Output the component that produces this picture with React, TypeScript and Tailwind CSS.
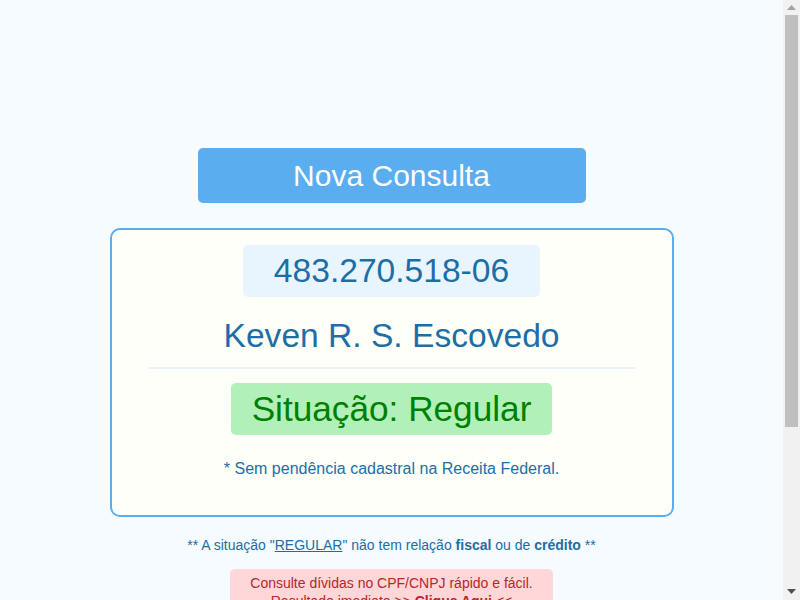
import React from "react";

export default function App() {
  return (
    <div className="h-[600px] flex overflow-hidden bg-[#f5fbff] font-['Liberation_Sans',Arial,sans-serif]">
      <div className="w-[783px] shrink-0 min-h-[824px] flex flex-col items-center pt-[148px] pb-[60px]">
        <button className="w-[388px] h-[55px] rounded-[5px] bg-[#5aaef0] text-white text-[30px] leading-none flex items-center justify-center">
          Nova Consulta
        </button>

        <div className="mt-[25px] w-[564px] h-[289px] border-2 border-[#5aaef0] rounded-[10px] bg-[#fefff8] flex flex-col items-center pt-[15px]">
          <div className="h-[52px] w-[297px] rounded-[5px] bg-[#e8f5fe] text-[#1c6ea6] text-[33.6px] flex items-center justify-center">
            483.270.518-06
          </div>
          <div className="mt-[20px] h-[39px] text-[#1c6ea6] text-[33.6px] flex items-center justify-center">
            Keven R. S. Escovedo
          </div>
          <div className="mt-[11px] w-[486px] h-[2px] bg-[#e6f1fa]"></div>
          <div className="mt-[14px] h-[52px] w-[321px] rounded-[5px] bg-[#b1f1b9] text-[#008000] text-[35.2px] flex items-center justify-center">
            Situação: Regular
          </div>
          <p className="mt-[25px] text-[16px] leading-[18px] text-[#1c6ea6]">
            * Sem pendência cadastral na Receita Federal.
          </p>
        </div>

        <p className="mt-[20px] text-[14px] leading-[16px] text-[#1c6ea6]">
          ** A situação "<span className="underline">REGULAR</span>" não tem relação <b>fiscal</b> ou de <b>crédito</b> **
        </p>

        <div className="mt-[16px] w-[323px] rounded-[5px] bg-[#ffd7d9] text-[#b8252b] text-[14px] leading-[18px] text-center py-[5px]">
          Consulte dívidas no CPF/CNPJ rápido e fácil.
          <br />
          Resultado imediato &gt;&gt; <b>Clique Aqui</b> &lt;&lt;
        </div>
      </div>

      <div className="w-[17px] h-[600px] shrink-0 bg-[#f1f1f1] flex flex-col items-center">
        <div className="h-[15px] flex items-center justify-center">
          <svg width="9" height="5" viewBox="0 0 9 5">
            <polygon points="0,5 9,5 4.5,0" fill="#a3a3a3" />
          </svg>
        </div>
        <div className="w-[13px] h-[412px] bg-[#bfbfbf]"></div>
        <div className="flex-1"></div>
        <div className="h-[17px] flex items-center justify-center">
          <svg width="9" height="5" viewBox="0 0 9 5">
            <polygon points="0,0 9,0 4.5,5" fill="#505050" />
          </svg>
        </div>
      </div>
    </div>
  );
}
